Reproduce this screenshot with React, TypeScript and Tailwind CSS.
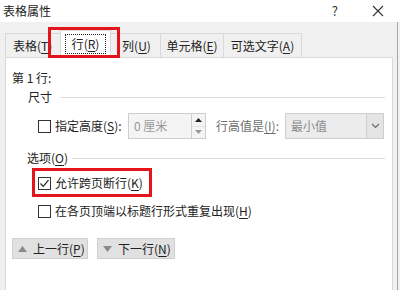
import React from 'react';

const font = { fontFamily: '"Noto Sans CJK SC", "Noto Sans", sans-serif' };

const Key: React.FC<{ k: string }> = ({ k }) => (
  <span>
    (<span className="underline underline-offset-2">{k}</span>)
  </span>
);

const Checkbox: React.FC<{ checked?: boolean }> = ({ checked }) => (
  <div className="w-[13px] h-[13px] border border-[#333] bg-white flex items-center justify-center shrink-0">
    {checked && (
      <svg width="11" height="11" viewBox="0 0 11 11">
        <path d="M1.5 5.5 L4.2 8.3 L9.5 2.2" fill="none" stroke="#222" strokeWidth="1.2" />
      </svg>
    )}
  </div>
);

const Tab: React.FC<{ w: string; children: React.ReactNode }> = ({ w, children }) => (
  <div
    className={`${w} h-[24px] border border-b-0 border-[#d9d9d9] bg-[#f0f0f0] flex items-center justify-center text-[12px] text-[#222] overflow-hidden whitespace-nowrap -ml-px`}
  >
    {children}
  </div>
);

export default function App() {
  return (
    <div className="w-[400px] h-[290px] bg-[#f0f0f0] overflow-hidden relative text-[#222]" style={font}>
      {/* Title bar */}
      <div className="h-[22px] bg-white flex items-center pl-[3px] pr-[16px]">
        <span className="text-[12px] leading-none">表格属性</span>
        <span className="ml-auto text-[13px] text-[#333] mr-[34px]">?</span>
        <svg width="12" height="12" viewBox="0 0 12 12">
          <path d="M1 1 L11 11 M11 1 L1 11" stroke="#333" strokeWidth="1.1" />
        </svg>
      </div>

      {/* Tabs */}
      <div className="flex items-end h-[27px] mt-[8px] pl-[6px] relative z-10">
        <Tab w="w-[57px]">
          <span className="pl-[7px] w-full">
            表格<Key k="T" />
          </span>
        </Tab>
        <div className="w-[51px] h-[28px] -ml-[2px] -mr-[2px] -mb-px bg-white border border-b-0 border-[#d9d9d9] flex items-start justify-center pt-[3px] relative z-10">
          <div className="border border-dotted border-[#222] px-[6px] h-[20px] flex items-center text-[12px]">
            行<Key k="R" />
          </div>
        </div>
        <Tab w="w-[53px]">
          <span className="pl-[4px]">
            列<Key k="U" />
          </span>
        </Tab>
        <Tab w="w-[64px]">
          单元格<Key k="E" />
        </Tab>
        <Tab w="w-[79px]">
          可选文字<Key k="A" />
        </Tab>
      </div>

      {/* Panel */}
      <div className="ml-[5px] w-[388px] h-[240px] bg-white border border-[#d9d9d9] pl-[6px] pr-[6px] text-[12px] leading-[16px]">
        <div className="mt-[12px] h-[16px]">第 1 行:</div>

        <div className="mt-[3px] h-[16px] flex items-center pl-[16px]">
          <span>尺寸</span>
          <div className="flex-1 h-px bg-[#dcdcdc] ml-[8px] mr-[1px]" />
        </div>

        <div className="mt-[8px] h-[26px] flex items-center pl-[26px]">
          <Checkbox />
          <span className="ml-[4px] w-[73px]">
            指定高度<Key k="S" />:
          </span>
          <div className="w-[64px] h-[26px] border border-[#cfcfcf] bg-[#f4f4f4] flex items-center pl-[5px] text-[#9a9a9a]">
            0 厘米
          </div>
          <div className="w-[14px] h-[26px] border border-l-0 border-[#cfcfcf] bg-[#f4f4f4] flex flex-col">
            <div className="flex-1 flex items-center justify-center border-b border-[#e0e0e0]">
              <svg width="7" height="4" viewBox="0 0 7 4">
                <path d="M0 4 L3.5 0 L7 4 Z" fill="#222" />
              </svg>
            </div>
            <div className="flex-1 flex items-center justify-center">
              <svg width="7" height="4" viewBox="0 0 7 4">
                <path d="M0 0 L3.5 4 L7 0 Z" fill="#9a9a9a" />
              </svg>
            </div>
          </div>
          <span className="ml-[10px] w-[69px] text-[#6d6d6d]">
            行高值是<span className="underline underline-offset-2">(I)</span>:
          </span>
          <div className="w-[99px] h-[26px] border border-[#cfcfcf] bg-[#ececec] flex items-center">
            <span className="pl-[5px] flex-1 text-[#8a8a8a]">最小值</span>
            <div className="w-[17px] h-full border-l border-[#cfcfcf] bg-[#e4e4e4] flex items-center justify-center">
              <svg width="9" height="6" viewBox="0 0 9 6">
                <path d="M1 1 L4.5 4.5 L8 1" fill="none" stroke="#666" strokeWidth="1.1" />
              </svg>
            </div>
          </div>
        </div>

        <div className="mt-[11px] h-[16px] flex items-center pl-[15px]">
          <span>
            选项<Key k="O" />
          </span>
          <div className="flex-1 h-px bg-[#dcdcdc] ml-[4px] mr-[1px]" />
        </div>

        <div className="mt-[9px] h-[16px] flex items-center pl-[26px]">
          <Checkbox checked />
          <span className="ml-[4px]">
            允许跨页断行<Key k="K" />
          </span>
        </div>

        <div className="mt-[12px] h-[16px] flex items-center pl-[26px]">
          <Checkbox />
          <span className="ml-[4px]">
            在各页顶端以标题行形式重复出现<Key k="H" />
          </span>
        </div>

        <div className="mt-[19px] flex gap-[9px]">
          <div className="w-[76px] h-[21px] bg-[#e1e1e1] border border-[#d0d0d0] flex items-center pl-[5px] gap-[6px]">
            <svg width="9" height="6" viewBox="0 0 9 6">
              <path d="M0 6 L4.5 0 L9 6 Z" fill="#8a8a8a" />
            </svg>
            <span>
              上一行<Key k="P" />
            </span>
          </div>
          <div className="w-[78px] h-[21px] bg-[#e1e1e1] border border-[#d0d0d0] flex items-center pl-[5px] gap-[6px]">
            <svg width="9" height="6" viewBox="0 0 9 6">
              <path d="M0 0 L4.5 6 L9 0 Z" fill="#8a8a8a" />
            </svg>
            <span>
              下一行<Key k="N" />
            </span>
          </div>
        </div>
      </div>

      {/* right window edge */}
      <div className="absolute right-[2px] top-[22px] bottom-0 w-px bg-[#a8a8a8]" />

      {/* Red highlight boxes */}
      <div className="absolute left-[48px] top-[27px] w-[72px] h-[31px] border-[3px] border-[#e3151b] z-20" />
      <div className="absolute left-[32px] top-[168px] w-[120px] h-[29px] border-[3px] border-[#e3151b] z-20" />
    </div>
  );
}
